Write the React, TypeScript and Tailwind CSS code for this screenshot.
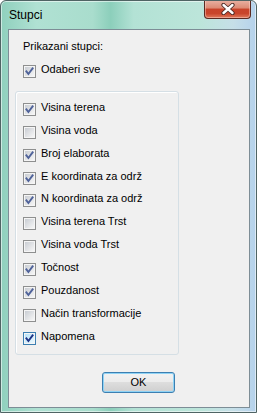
import React from "react";

function Check({ checked, hot }: { checked: boolean; hot?: boolean }) {
  return (
    <div
      className={`w-[13px] h-[13px] shrink-0 border p-[1px] bg-[#f5f5f5] ${
        hot ? "border-[#3c7fb1]" : "border-[#8e8f8f]"
      }`}
    >
      <div
        className={`w-full h-full ${
          hot
            ? "bg-[linear-gradient(135deg,#b8e3f9,#eaf7fd)]"
            : "bg-[linear-gradient(135deg,#c9cdd3,#f6f6f6)]"
        }`}
      >
        {checked && (
          <svg width="9" height="9" viewBox="0 0 9 9" className="block">
            <polyline
              points="1.4,4.4 3.4,7 7.6,1.4"
              fill="none"
              stroke={hot ? "#1f3587" : "#50639a"}
              strokeWidth="1.9"
              strokeLinecap="square"
              strokeLinejoin="miter"
            />
          </svg>
        )}
      </div>
    </div>
  );
}

function Row({ label, checked, hot }: { label: string; checked: boolean; hot?: boolean }) {
  return (
    <div className="h-[22.87px] flex items-center">
      <Check checked={checked} hot={hot} />
      <span className="ml-[5px] pb-[4px] leading-[13px] whitespace-nowrap">{label}</span>
    </div>
  );
}

const items: [string, boolean, boolean?][] = [
  ["Visina terena", true],
  ["Visina voda", false],
  ["Broj elaborata", true],
  ["E koordinata za održ", true],
  ["N koordinata za održ", true],
  ["Visina terena Trst", false],
  ["Visina voda Trst", false],
  ["Točnost", true],
  ["Pouzdanost", true],
  ["Način transformacije", false],
  ["Napomena", true, true],
];

export default function App() {
  return (
    <div className="w-[257px] h-[413px] flex flex-col rounded-t-[6px] border border-[#4f6464] overflow-hidden font-['Liberation_Sans',Arial,sans-serif] text-[11px] text-black bg-[linear-gradient(90deg,#8fd0bd_0%,#b0e1d3_14%,#a9ddcd_36%,#8ccfbb_43%,#b3e2d5_52%,#bce5da_78%,#c6dfe8_91%,#b5d2ec_100%)] shadow-[inset_0_0_0_1px_rgba(255,255,255,0.55)]">
      {/* title bar */}
      <div className="h-[28px] flex items-start justify-between shrink-0">
        <div className="ml-[8px] mt-[7px] text-[12px] leading-[14px] text-black">Stupci</div>
        <div className="mr-[5px] -mt-[1px] w-[47px] h-[19px] rounded-b-[4px] border border-t-0 border-[#5b2a22] bg-[linear-gradient(180deg,#e9b3a5_0%,#dc8a74_45%,#c8432a_50%,#c9452b_75%,#e07a5c_100%)] shadow-[inset_0_0_0_1px_rgba(255,220,210,0.45)] flex items-center justify-center">
          <svg width="16" height="12" viewBox="0 0 16 12">
            <path d="M3.5 2 L12.5 10 M12.5 2 L3.5 10" stroke="#4a2a26" strokeWidth="4.2" strokeLinecap="round" />
            <path d="M3.5 2 L12.5 10 M12.5 2 L3.5 10" stroke="#ffffff" strokeWidth="2.4" strokeLinecap="round" />
          </svg>
        </div>
      </div>

      {/* client */}
      <div className="ml-[7px] mr-[6px] mb-[4px] flex-1 flex flex-col border border-[#7d8d96] bg-[#f0f0f0] pl-[6px]">
        <div className="ml-[8px] mt-[10px] leading-[13px] h-[13px]">Prikazani stupci:</div>
        <div className="ml-[8px] mt-[12px] h-[13px] flex items-center">
          <Check checked={true} />
          <span className="ml-[5px] pb-[4px] leading-[13px]">Odaberi sve</span>
        </div>

        <div className="mt-[13px] w-[164px] h-[264px] rounded-[3px] border border-[#d5dfe5] shadow-[inset_1px_1px_0_#ffffff] pl-[7px] pt-[6.07px]">
          {items.map(([label, checked, hot]) => (
            <Row key={label} label={label} checked={checked} hot={hot} />
          ))}
        </div>

        <div className="mt-[17px] ml-[87px] w-[73px] h-[21px] rounded-[3px] border border-[#3c7fb1] bg-[linear-gradient(180deg,#f2f2f2_0%,#ebebeb_50%,#dddddd_50%,#cfcfcf_100%)] shadow-[inset_0_0_0_1px_#8fd3f5] flex items-center justify-center leading-[13px]">
          OK
        </div>
      </div>
    </div>
  );
}
